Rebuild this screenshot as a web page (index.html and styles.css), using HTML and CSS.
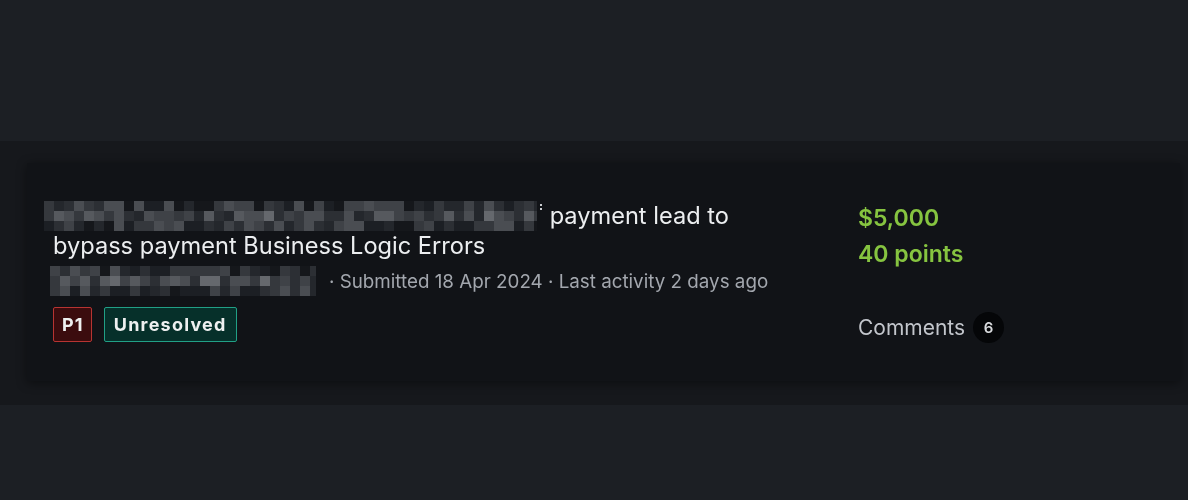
FILE: index.html
```html
<!DOCTYPE html>
<html>
  <head>
    <title>Reports</title>
    <meta name="viewport" content="width=device-width, initial-scale=1.0" />
    <link rel="stylesheet" href="styles.css">
  </head>
  <body>
    <div class="top-band"></div>

    <div class="report-list">
      <div class="report-card">
        <div class="report-main">
          <h3 class="report-title">
            <canvas class="pixelated title-blur" width="499" height="30" data-seed="7" data-tail="1"></canvas> payment lead to bypass payment Business Logic Errors
          </h3>

          <div class="report-meta">
            <canvas class="pixelated meta-blur" width="266" height="30" data-seed="19"></canvas>
            <span class="meta-text">· Submitted 18 Apr 2024 · Last activity 2 days ago</span>
          </div>

          <div class="report-tags">
            <span class="tag tag-priority">P1</span>
            <span class="tag tag-status">Unresolved</span>
          </div>
        </div>

        <div class="report-side">
          <div class="bounty">$5,000</div>
          <div class="points">40 points</div>
          <div class="comments">
            Comments
            <span class="comment-count">6</span>
          </div>
        </div>
      </div>
    </div>

    <div class="bottom-band"></div>

    <script src="script.js"></script>
  </body>
</html>
```

FILE: styles.css
```css
body {
  margin: 0;
  background-color: #1c1f24;
  font-family: "Inter", "Noto Sans", sans-serif;
  color: #e6e8eb;
}

.top-band {
  height: 141px;
}

.report-list {
  background-color: #16181c;
  padding: 22px 8px 24px 27px;
}

.report-card {
  background-color: #111317;
  box-shadow: 0 2px 10px rgba(0, 0, 0, 0.45);
  padding: 38px 26px 38px 26px;
  display: grid;
  grid-template-columns: 1fr 296px;
  column-gap: 75px;
}

.report-title {
  margin: 0;
  font-size: 23.6px;
  font-weight: 400;
  line-height: 30px;
  color: #eceef0;
}

.pixelated {
  display: inline-block;
  vertical-align: top;
}

.title-blur {
  margin-left: -9px;
}

.report-meta {
  margin-top: 5px;
  display: flex;
  align-items: center;
  gap: 13px;
}

.meta-blur {
  margin-left: -3px;
}

.meta-text {
  font-size: 18.8px;
  color: #a3a7ae;
}

.report-tags {
  margin-top: 11px;
  display: flex;
  gap: 12px;
}

.tag {
  display: inline-flex;
  align-items: center;
  height: 35px;
  box-sizing: border-box;
  padding: 0 9px;
  font-size: 18px;
  font-weight: 700;
  letter-spacing: 1.2px;
  border-radius: 2px;
  color: #eef0f0;
}

.tag-priority {
  padding: 0 7px 0 8px;
  background-color: #3b0c0e;
  border: 1px solid #b83432;
}

.tag-status {
  background-color: #06302a;
  border: 1px solid #21a086;
}

.bounty,
.points {
  font-size: 23px;
  font-weight: 600;
  line-height: 36px;
  color: #86c440;
}

.bounty {
  margin-top: -1px;
}

.comments {
  margin-top: 40px;
  display: flex;
  align-items: center;
  gap: 8px;
  font-size: 21px;
  color: #c3c6cc;
}

.comment-count {
  width: 31px;
  height: 31px;
  border-radius: 50%;
  background-color: #050608;
  display: flex;
  align-items: center;
  justify-content: center;
  font-size: 15px;
  font-weight: 600;
  color: #d8dadd;
}

.bottom-band {
  height: 95px;
}
```

FILE: script.js
```js
// Draw the mosaic blocks that hide the redacted text
const shades = [
  "#15171b", "#1c1f24", "#24272c", "#2c2f34",
  "#35383d", "#3f4247", "#4a4d52", "#56595e", "#65686d", "#7b7e83",
];

function makeRandom(seed) {
  let s = seed;
  return function () {
    s = (s * 1103515245 + 12345) % 2147483648;
    return s / 2147483648;
  };
}

document.querySelectorAll(".pixelated").forEach((canvas) => {
  const ctx = canvas.getContext("2d");
  const rand = makeRandom(Number(canvas.dataset.seed));
  const size = 10;
  const width = canvas.dataset.tail ? canvas.width - 6 : canvas.width;
  for (let y = 0; y < canvas.height; y += size) {
    for (let x = 0; x < width; x += size) {
      // middle row is brighter, like the letters that were hidden
      let bias = y === size ? 2 : 0;
      let i = Math.floor(rand() * 7) + bias;
      ctx.fillStyle = shades[Math.min(i, shades.length - 1)];
      ctx.fillRect(x, y, Math.min(size, width - x), size);
    }
  }
  // leftover edge of a letter next to the blurred part
  if (canvas.dataset.tail) {
    ctx.fillStyle = "#c9ccd0";
    ctx.fillRect(canvas.width - 3, 3, 2, 2);
    ctx.fillRect(canvas.width - 3, 7, 2, 2);
  }
});
```
